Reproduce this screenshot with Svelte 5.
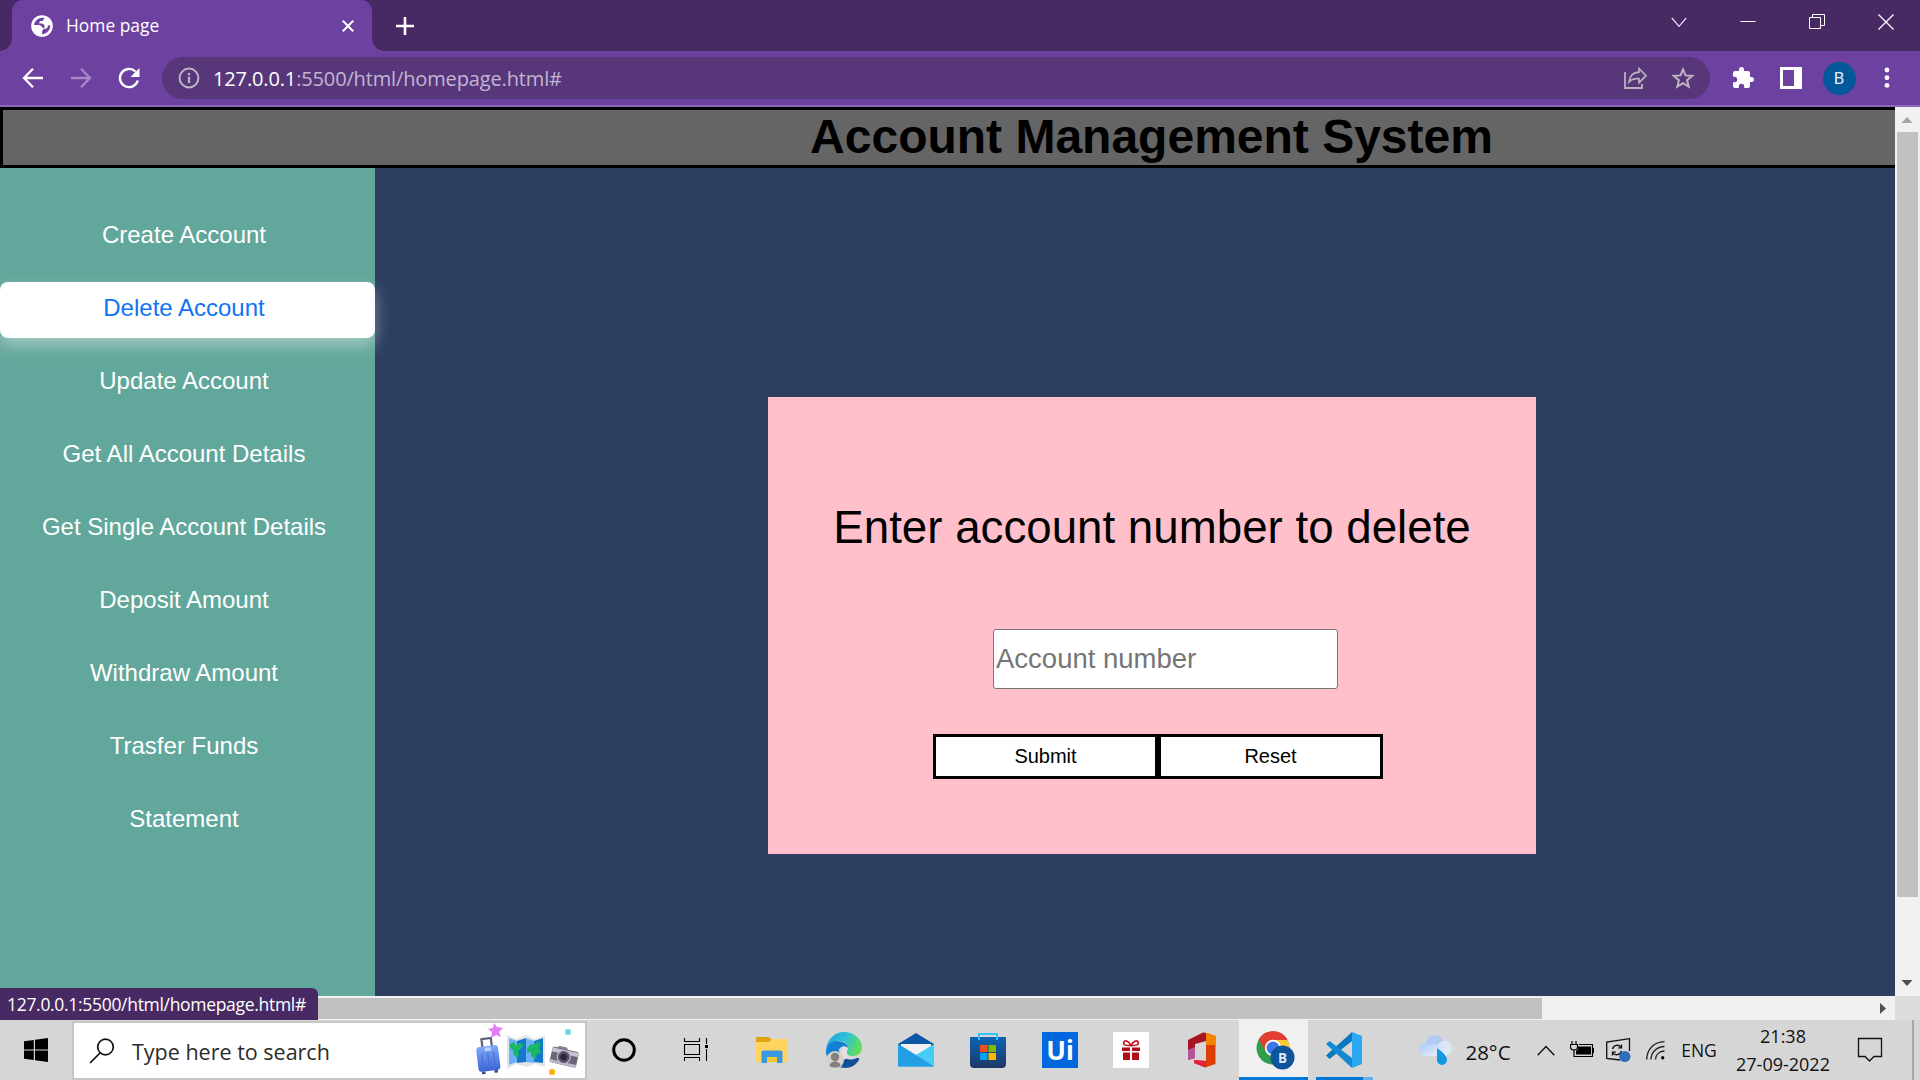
<script>
  const menu = [
    'Create Account',
    'Delete Account',
    'Update Account',
    'Get All Account Details',
    'Get Single Account Details',
    'Deposit Amount',
    'Withdraw Amount',
    'Trasfer Funds',
    'Statement'
  ];
  const active = 'Delete Account';
</script>

<div class="screen">
  <header class="tabstrip">
    <div class="tab">
      <svg class="favicon" width="22" height="22" viewBox="0 0 22 22">
        <circle cx="11" cy="11" r="10.800" fill="#fff" />
        <path d="M13.500 3C8.500 1.800 3.800 5.200 3 10h5.500l2.300 1.500 1.200 2 1.500-1V10L11 8.600H8.300V7.200l1-1.200h2.200z" fill="#6d41a0" />
        <path d="M19.200 10c.4 4.800-3.200 8.800-8 9.200l-.2-2.700 1.500-2.600 3-.4 1.200-1.200v-1.500z" fill="#6d41a0" />
      </svg>
      <span class="tab-title">Home page</span>
      <svg class="tab-close" width="14" height="14" viewBox="0 0 14 14"><path d="M1.800 1.800 12.200 12.200M12.200 1.800 1.800 12.200" stroke="#fff" stroke-width="2" /></svg>
    </div>
    <svg class="plus" width="20" height="20" viewBox="0 0 20 20"><path d="M10 1v18M1 10h18" stroke="#fff" stroke-width="2.600" /></svg>
    <div class="window-controls">
      <span><svg width="16" height="16" viewBox="0 0 16 16"><path d="M.8 4 8 12.300 15.200 4" fill="none" stroke="#e8e0f0" stroke-width="1.200" /></svg></span>
      <span><svg width="16" height="16" viewBox="0 0 16 16"><path d="M.5 7.500h15" stroke="#fff" /></svg></span>
      <span><svg width="16" height="16" viewBox="0 0 16 16"><path d="M.5 3.500h11v11H.5zM3.500 3V.5h12v11h-3.500" fill="none" stroke="#fff" /></svg></span>
      <span><svg width="16" height="16" viewBox="0 0 16 16"><path d="M.5.500l15 15M15.500.500l-15 15" stroke="#fff" stroke-width="1.300" /></svg></span>
    </div>
  </header>

  <div class="toolbar">
    <div class="nav">
      <svg width="24" height="24" viewBox="0 0 24 24"><path d="M22 12H3.500M12 2.800 3 12l9 9.200" fill="none" stroke="#fff" stroke-width="2.300" /></svg>
      <svg width="24" height="24" viewBox="0 0 24 24"><path d="M2 12h18.500M12 2.800 21 12l-9 9.200" fill="none" stroke="#a689c9" stroke-width="2.300" /></svg>
      <svg width="24" height="24" viewBox="0 0 24 24"><path d="M20.800 14.500A9.100 9.100 0 1 1 18.500 5.600" fill="none" stroke="#fff" stroke-width="2.400" /><path d="M22.500 2v9h-9z" fill="#fff" /></svg>
    </div>
    <div class="omnibox">
      <svg width="22" height="22" viewBox="0 0 22 22"><circle cx="11" cy="11" r="9.400" fill="none" stroke="#bcb8c4" stroke-width="2" /><path d="M11 9.800V16M11 6v2.200" stroke="#bcb8c4" stroke-width="2.200" /></svg>
      <span class="url"><b>127.0.0.1</b>:5500/html/homepage.html#</span>
      <svg class="share" width="24" height="24" viewBox="0 0 24 24"><path d="M2 6v16h17v-4" fill="none" stroke="#b9b1bd" stroke-width="1.800" /><path d="M6 16c.6-5.800 4-9.500 10-9.800V2.500l7 7.200-7 7v-4C11.500 12.400 8.500 13 6 16z" fill="none" stroke="#b9b1bd" stroke-width="1.700" /></svg>
      <svg width="24" height="24" viewBox="0 0 24 24"><path d="M12 3.300 14.500 9.400l6.700.5-5.100 4.300 1.600 6.500L12 17.200l-5.700 3.500 1.600-6.500L2.800 9.900l6.700-.5z" fill="none" stroke="#bdb5bf" stroke-width="2" /></svg>
    </div>
    <div class="actions">
      <span><svg width="24" height="24" viewBox="0 0 24 24"><path d="M20.500 11H19V7a2 2 0 0 0-2-2h-4V3.500a2.500 2.500 0 0 0-5 0V5H4a2 2 0 0 0-2 2v3.800h1.500a2.700 2.700 0 0 1 0 5.400H2V20a2 2 0 0 0 2 2h3.800v-1.500a2.700 2.700 0 0 1 5.400 0V22H17a2 2 0 0 0 2-2v-4h1.500a2.500 2.500 0 0 0 0-5z" fill="#fff" /></svg></span>
      <span><svg width="22" height="22" viewBox="0 0 22 22"><path d="M1.500 1.500h19v19h-19z" fill="none" stroke="#fff" stroke-width="3" /><path d="M14 1h7v20h-7z" fill="#fff" /></svg></span>
      <span><i class="avatar">B</i></span>
      <span><svg width="6" height="22" viewBox="0 0 6 22"><g fill="#fff"><circle cx="3" cy="3" r="2.400" /><circle cx="3" cy="10.700" r="2.400" /><circle cx="3" cy="18.400" r="2.400" /></g></svg></span>
    </div>
  </div>

  <div class="viewport">
    <div class="page">
      <div class="banner"><h1>Account Management System</h1></div>
      <div class="body">
        <nav class="sidebar">
          {#each menu as item}
            <a href="#top" class:active={item === active}>{item}</a>
          {/each}
        </nav>
        <main>
          <form class="card">
            <p>Enter account number to delete</p>
            <input placeholder="Account number" />
            <div class="buttons">
              <button type="button">Submit</button><button type="button">Reset</button>
            </div>
          </form>
        </main>
      </div>
    </div>
    <div class="vscroll">
      <svg width="25" height="25" viewBox="0 0 25 25"><path d="M6.500 16h11L12 10z" fill="#a3a3a3" /></svg>
      <div class="vthumb"></div>
      <svg width="25" height="25" viewBox="0 0 25 25"><path d="M6.500 9h11L12 15z" fill="#505050" /></svg>
    </div>
    <div class="hscroll">
      <div class="hthumb"></div>
      <svg width="24" height="24" viewBox="0 0 24 24"><path d="M9 7v11l6-5.500z" fill="#505050" /></svg>
    </div>
    <div class="corner"></div>
    <div class="status"><span>127.0.0.1:5500/html/homepage.html#</span></div>
  </div>

  <footer class="taskbar">
    <div class="start">
      <svg width="24" height="24" viewBox="0 0 24 24"><path d="M0 3.300 9.800 1.900v9.600H0zM11 1.700 24 0v11.500H11zM0 12.600h9.800v9.500L0 20.800zM11 12.600h13V24l-13-1.700z" /></svg>
    </div>
    <div class="search">
      <svg class="lens" width="26" height="26" viewBox="0 0 26 26"><circle cx="16.500" cy="9" r="7.800" fill="none" stroke="#111" stroke-width="1.700" /><path d="M11 15 1 25" stroke="#111" stroke-width="1.700" /></svg>
      <span class="search-text">Type here to search</span>
      <svg class="trip" width="112" height="56" viewBox="0 0 112 56">
        <defs>
          <linearGradient id="bag" x1="0" y1="0" x2="0" y2="1"><stop offset="0" stop-color="#7fabf6" /><stop offset="1" stop-color="#3e63d4" /></linearGradient>
        </defs>
        <g transform="rotate(-7 15 34)">
          <path d="M10.500 26V16.500h9.500v9.500" fill="none" stroke="#59627a" stroke-width="2.200" />
          <rect x="4" y="24" width="22" height="25" rx="3.500" fill="url(#bag)" />
          <path d="M9 31v15M15 31v15M21 31v15" stroke="#4a72d8" stroke-width="1.200" />
          <rect x="12.500" y="25.500" width="6.500" height="3.500" rx="1" fill="#b9d3ff" />
          <path d="M7 49h3.500v2.500H7zM19.500 49H23v2.500h-3.500z" fill="#354a83" />
        </g>
        <g transform="translate(0 1)">
          <path d="m34 12 9 4 10-4 9 4 10-4v32l-10-3-9 3-10-3-9 5z" fill="#e3e5e8" />
          <path d="M36 15l8 3v21l-8 3zM53 15l8 3v22l-8-1z" fill="#69b1fa" />
          <path d="m44 18 9-3v24l-9 1zM61 18l9-3v25l-9-1z" fill="#1678c9" />
          <path d="m37 21 4-2 2 4 3-3 4 1-1 4-4 3 1 4-2 3-3-3-1-5-3-2zM54 25l4-4 3 1 4-4 3 4-2 3 2 5-4 1-2 5-4-3v-4l-4 1z" fill="#18b866" />
        </g>
        <g transform="rotate(13 91 34)">
          <path d="M84 25h8l2 3H82z" fill="#8b849b" />
          <rect x="78" y="27" width="27" height="16" rx="2" fill="#6c6575" />
          <path d="M78 28h27v4H78z" fill="#c8c1d5" />
          <path d="M78 40h27v3H78z" fill="#beb7cd" />
          <circle cx="91" cy="35" r="6.500" fill="#5a5363" stroke="#bdb5cb" stroke-width="1.300" /><circle cx="91" cy="35" r="3.400" fill="#2e2940" />
        </g>
        <path d="m21 1 3 4 6 1-4 4 2 5-5-2-5 3 1-6-4-3 5-1z" fill="#e47cf5" />
        <circle cx="95" cy="10" r="3" fill="#6cd5e8" /><circle cx="79" cy="50" r="3" fill="#fdb000" />
      </svg>
    </div>
    <div class="apps">
      <span><svg width="26" height="26" viewBox="0 0 26 26"><circle cx="13" cy="13" r="10.300" fill="none" stroke="#000" stroke-width="3" /></svg></span>
      <span><svg width="26" height="26" viewBox="0 0 26 26"><path d="M1.500 1v3.500h15V1M1.500 7.500h15v10h-15zM1.500 24v-3.500h15V24M23.500 1v6M23.500 12v12" fill="none" stroke="#000" stroke-width="1.100" /><path d="M22 8h3v3h-3z" /></svg></span>
      <span class="explorer"><svg width="32" height="28" viewBox="0 0 32 28"><path d="M0 2Q0 1 1 1h12l3 3-3 4H0z" fill="#e2a20b" /><path d="M0 6h13l3-3h15q1 0 1 1v21q0 1-1 1H1q-1 0-1-1z" fill="#ffd45e" /><path d="M5.500 27V16q0-1.500 1.500-1.500h18q1.500 0 1.500 1.500v11H21v-6H11v6z" fill="#3a97e0" /><path d="M11 21h10v5H11z" fill="#fbc62e" /></svg></span>
      <span><svg width="36" height="36" viewBox="0 0 36 36">
        <defs><linearGradient id="edge" x1="0" y1=".3" x2="1" y2=".6"><stop offset="0" stop-color="#22a2dd" /><stop offset=".5" stop-color="#2fc2d6" /><stop offset="1" stop-color="#66e04f" /></linearGradient></defs>
        <path d="M0 18C1 7 9 0 18 0c11 0 18 8 18 15 0 6-4 9-9 9-4 0-7-1-7-3 0-1 2-2 2-5 0-5-6-8-11-7C6 9 1 13 0 18z" fill="url(#edge)" />
        <path d="M0 19C1 12 6 9 11 9c6 0 11 3 11 7-4-4-9-1-10 4-1 6 3 12 8 15.800C8 37 0 29 0 19z" fill="#117fd3" />
        <path d="M13 18c0 7 8 11 15 9 3-1 6-2 5 1-3 5-8 8-14 8-6-3-11-11-6-18z" fill="#114f9b" />
        <circle cx="9" cy="28" r="9" fill="#d6d3ce" /><path d="M15 18c2-3 4-4 6-2v6l2 2-5 4z" fill="#e3e1df" /><circle cx="9" cy="25" r="4.200" fill="#858079" /><path d="M3.500 34c0-6 11-6 11 0-3 2-8 2-11 0z" fill="#858079" />
      </svg></span>
      <span><svg width="36" height="34" viewBox="0 0 36 34"><path d="M0 11 18 0l18 11v5H0z" fill="#0d57a7" /><path d="M3 11h30v8L18 27 3 19z" fill="#f1f1f1" /><path d="M0 11 36 33.500H0z" fill="#2aa7ea" /><path d="m36 11-18 11L36 33.500z" fill="#43cdf7" /><path d="M0 11 18 22l18 11.500H0z" fill="#249fe4" /></svg></span>
      <span><svg width="36" height="36" viewBox="0 0 36 36"><defs><linearGradient id="store" x1="0" y1="0" x2="0" y2="1"><stop offset="0" stop-color="#0b65b5" /><stop offset="1" stop-color="#1f3864" /></linearGradient></defs><path d="M0 5h36v27q0 4-4 4H4q-4 0-4-4z" fill="url(#store)" /><path d="M9 8V2h18v6" fill="none" stroke="#32c1f3" stroke-width="2" /><path d="M10 13h7.500v7H10z" fill="#f25022" /><path d="M18.500 13H26v7h-7.500z" fill="#7fba00" /><path d="M10 21h7.500v7H10z" fill="#00a4ef" /><path d="M18.500 21H26v7h-7.500z" fill="#ffb900" /></svg></span>
      <span><i class="uipath">Ui</i></span>
      <span class="gift"><svg width="36" height="36" viewBox="0 0 36 36"><path d="M0 0h36v36H0z" fill="#fff" /><path d="M9 15.500h8v3.500H9zM19 15.500h8v3.500h-8zM10 20.500h7V28h-7zM19 20.500h7V28h-7z" fill="#b00f18" /><path d="M17.500 13.500c-5 .3-7.500-.8-6.800-3.300C12 7.500 16 9 18 13.500c2-4.500 6-6 7.300-3.300.7 2.500-1.800 3.600-6.800 3.300z" fill="none" stroke="#c8141d" stroke-width="1.600" /></svg></span>
      <span class="office"><svg width="28" height="36" viewBox="0 0 28 36"><path d="M0 8 15 .5 18 1v8L7 12v14L0 28z" fill="#a51522" /><path d="M0 18l7-3v11l-7 2z" fill="#b5569b" /><path d="M17 .5 27.500 4v28L17 35.500 6 31v-3l12 1V1z" fill="#dc3e05" /><path d="M17 .5 27.500 4v9H18V1z" fill="#f58400" /><path d="M6 28l12 1v6.300h-1L6 31z" fill="#e3223f" /></svg></span>
      <span class="chrome"><svg width="40" height="40" viewBox="0 0 40 40">
        <circle cx="17" cy="17" r="16.500" fill="#2e9e4a" /><path d="M17 17 2.700 8.700A16.500 16.500 0 0 1 31.300 8.700z" fill="#e33e32" /><path d="M2.700 8.700 10 21l7-12.500h14.300A16.500 16.500 0 0 0 2.700 8.700z" fill="#e33e32" /><path d="M17 9h14.400A16.500 16.500 0 0 1 17.500 33.500L24 21z" fill="#fcc934" />
        <circle cx="17" cy="17" r="8.200" fill="#fff" /><circle cx="17" cy="17" r="6.400" fill="#3b78e7" />
        <circle cx="26.500" cy="26.500" r="12" fill="#0d549b" /><text x="26.500" y="31.500" text-anchor="middle" font-size="13.500" font-weight="700" fill="#d9e8f5">B</text>
      </svg></span>
      <span class="vscode"><svg width="36" height="36" viewBox="0 0 36 36"><path d="M0 23.500 3.500 27 26 9V0z" fill="#0b78be" /><path d="M3.500 9 0 12l26 24V26z" fill="#118ad2" /><path d="m26 0 10 4v28l-10 4z" fill="#2aa8f2" /></svg></span>
    </div>
    <div class="tray">
      <span class="w48"><svg width="34" height="30" viewBox="0 0 34 30"><defs><linearGradient id="cloud" x1="0" y1="0" x2="1" y2="1"><stop offset="0" stop-color="#a9c8f6" /><stop offset="1" stop-color="#f1f5fc" /></linearGradient></defs><circle cx="16" cy="9" r="9" fill="#b2cbf3" /><circle cx="26" cy="13" r="7.500" fill="#dde6f5" /><path d="M7 21a6.500 6.500 0 1 1 4-11.500C15 8 21 10 26 13l1 8z" fill="url(#cloud)" /><path d="M18 13c4 3 10 7 10 12a5 5 0 0 1-10 0z" fill="#1399e2" /></svg></span>
      <span class="temp w58">28°C</span>
      <span class="caret"><svg width="18" height="11" viewBox="0 0 18 11"><path d="M.7 10.300 9 1.500l8.300 8.800" fill="none" stroke="#111" stroke-width="1.400" /></svg></span>
      <span class="w36 power"><svg width="24" height="18" viewBox="0 0 24 18"><path d="M2 0v3M6 0v3M.5 3.500h7v3Q7 9 4 9 1 9 .5 6.500zM4 9v6.500h18.500v-12H9" fill="none" stroke="#000" stroke-width="1.200" /><path d="M8 5.500h13v8H6V10l2-2zM23 7h1v5h-1z" /></svg></span>
      <span class="w38"><svg width="25" height="25" viewBox="0 0 25 25"><path d="M14 22 .7 20.500V4L23.500.7V13" fill="none" stroke="#111" stroke-width="1.300" /><path d="M6.500 11a5 5 0 0 1 9-1.500m0-3v3.300h-3.300M15.500 13a5 5 0 0 1-9 1.500m0 3v-3.300h3.300" fill="none" stroke="#111" stroke-width="1.300" /><circle cx="18.800" cy="18.500" r="5.600" fill="#2d70b9" /></svg></span>
      <span class="w36 wifi"><svg width="19" height="19" viewBox="0 0 19 19"><g fill="none" stroke="#222" stroke-width="1.300"><path d="M.7 18.500C1 8 8 1 18.500.7M5 18.500C5 11 11 5.500 18.500 5.500M9.500 18.500c0-5 4-8.500 9-8.500" /></g><circle cx="16.700" cy="16.700" r="1.700" /></svg></span>
      <span class="lang w50">ENG</span>
      <span class="clock"><em class="time">21:38</em><em class="date">27-09-2022</em></span>
      <span class="w56"><svg width="26" height="26" viewBox="0 0 26 26"><path d="M1.500 1.500h23v18H17l-4.500 4.500L8 19.500H1.500z" fill="none" stroke="#111" stroke-width="1.300" /></svg></span>
      <i class="peek"></i>
    </div>
  </footer>
</div>

<style>
  :global(body) { margin: 0; overflow: hidden; }
  .screen {
    width: 1920px; height: 1080px; overflow: hidden;
    display: flex; flex-direction: column;
    font-family: "Open Sans", "Noto Sans", sans-serif;
    background: #2d3e61;
  }
  svg { display: block; flex: none; }
  span, i, em { font-style: normal; }

  .tabstrip { height: 51px; flex: none; background: #472a64; display: flex; padding-left: 12px; }
  .tab {
    position: relative; width: 360px; box-sizing: border-box; height: 51px; padding: 0 17px 0 19px;
    display: flex; align-items: center; background: #6d41a0; border-radius: 11px 11px 0 0; color: #fff;
  }
  .tab::before, .tab::after { content: ""; position: absolute; bottom: 0; width: 12px; height: 12px; }
  .tab::before { left: -12px; background: radial-gradient(circle at 0 0, transparent 11.500px, #6d41a0 12px); }
  .tab::after { right: -12px; background: radial-gradient(circle at 100% 0, transparent 11.500px, #6d41a0 12px); }
  .tab-title { margin-left: 13px; padding-bottom: 1px; font-size: 17.400px; line-height: 24px; }
  .tab-close { margin-left: auto; }
  .plus { margin: 16px 0 0 23px; }
  .window-controls { margin-left: auto; display: flex; height: 43px; }
  .window-controls span { width: 69px; display: flex; align-items: center; justify-content: center; }

  .toolbar { height: 56px; flex: none; box-sizing: border-box; background: #6d41a0; border-bottom: 2px solid #9068b8; display: flex; align-items: center; }
  .nav { display: flex; gap: 24px; padding-left: 21px; width: 141px; }
  .omnibox {
    width: 1548px; height: 42px; box-sizing: border-box; border-radius: 21px; background: #57377a;
    display: flex; align-items: center; padding: 0 15px 0 16px;
  }
  .url { margin-left: 13px; padding-top: 1px; font-size: 20px; line-height: 28px; letter-spacing: -.14px; color: #c3b5d2; white-space: nowrap; }
  .url b { font-weight: 400; color: #fff; }
  .share { margin: 0 24px 0 auto; }
  .actions { display: flex; padding-left: 9px; }
  .actions span { width: 48px; display: flex; align-items: center; justify-content: center; }
  .avatar { width: 33px; height: 33px; border-radius: 50%; background: #03579b; color: #e0edf5; font: 17px/33px Roboto, sans-serif; text-align: center; }

  .viewport { position: relative; height: 913px; flex: none; display: grid; grid-template: 889px 24px / 1895px 25px; }
  .page { overflow: hidden; background: #2d3e61; font-family: "Liberation Sans", Arial, sans-serif; }
  .banner { width: 2303px; height: 61px; box-sizing: border-box; border: 3px solid #000; background: #656565; }
  .banner h1 { margin: 0; text-align: center; font-size: 48px; line-height: 53px; color: #000; }
  .body { display: flex; height: 828px; }
  .sidebar { width: 375px; flex: none; box-sizing: border-box; padding-top: 41px; background: #62a79b; display: flex; flex-direction: column; gap: 17px; }
  .sidebar a {
    box-sizing: border-box; height: 56px; padding: 12px 7px 0 0; text-align: center;
    font-size: 24px; line-height: 28px; color: #fff; text-decoration: none; border-radius: 8px;
  }
  .sidebar a.active { position: relative; background: #fff; color: #1173f5; box-shadow: 0 8px 16px rgba(255, 255, 255, .4); }
  main { width: 1554px; flex: none; display: flex; justify-content: center; align-items: flex-start; padding-top: 229px; box-sizing: border-box; }
  .card { width: 768px; height: 457px; background: #ffc0cb; display: flex; flex-direction: column; align-items: center; }
  .card p { margin: 103px 0 0; font-size: 45.700px; line-height: 56px; color: #000; white-space: nowrap; }
  .card input {
    margin: 73px 0 0 27px; width: 345px; height: 60px; box-sizing: border-box; padding: 0 2px; border: 1px solid #767676; border-radius: 3px;
    font: 27.500px "Liberation Sans", Arial, sans-serif; background: #fff; outline: none;
  }
  .card input::placeholder { color: #757575; opacity: 1; }
  .buttons { margin: 45px 0 0 12px; display: flex; }
  .buttons button { width: 225px; height: 45px; box-sizing: border-box; padding: 0; border: 3px solid #000; background: #fff; font: 20px "Liberation Sans", Arial, sans-serif; color: #000; }

  .vscroll { background: #f1f1f1; display: flex; flex-direction: column; justify-content: space-between; }
  .vthumb { width: 21px; height: 765px; margin: 0 auto auto 2px; background: #c1c1c1; }
  .hscroll { background: #f1f1f1; display: flex; justify-content: space-between; align-items: center; }
  .hthumb { width: 1542px; height: 21px; background: #c1c1c1; }
  .corner { background: #dcdcdc; }
  .status {
    position: absolute; left: 0; bottom: 0; width: 318px; height: 32px; box-sizing: border-box; padding-left: 7px;
    background: #472a64; border-radius: 0 6px 0 0; color: #fff; font-size: 17.500px; line-height: 32px; letter-spacing: -.31px; white-space: nowrap;
  }

  .taskbar { height: 60px; flex: none; background: #d6d6d6; display: flex; color: #111; }
  .start { width: 72px; padding-right: 1px; box-sizing: border-box; display: flex; align-items: center; justify-content: center; }
  .search { width: 515px; height: 59px; margin-top: 1px; box-sizing: border-box; border: 2px solid #c6c6c6; background: #fff; display: flex; align-items: center; padding-left: 15px; }
  .search-text { margin-left: 17px; padding-top: 2px; font-size: 21.500px; line-height: 30px; color: #2b2b2b; white-space: nowrap; }
  .trip { margin: -2px 0 0 auto; }
  .apps { display: flex; padding-left: 1px; }
  .apps span { width: 72px; height: 60px; display: flex; align-items: center; justify-content: center; }
  .apps .explorer { margin-left: 4px; }
  .uipath { width: 36px; height: 36px; background: #0067df; color: #fff; font: 700 26px/37px "Noto Sans", sans-serif; text-align: center; }
  .apps .gift { box-sizing: border-box; padding-right: 2px; }
  .apps .office { width: 68px; }
  .apps .chrome { width: 69px; box-sizing: border-box; background: #f0f0f0; border-bottom: 3px solid #0078d7; margin-left: 3px; padding: 5px 0 0 5px; }
  .apps .vscode { width: 57px; box-sizing: border-box; margin-left: 8px; border-bottom: 3px solid; border-image: linear-gradient(90deg, #0078d7 0 45px, #66aee7 45px) 3; padding: 3px 2px 0 0; }
  .tray { margin-left: auto; display: flex; }
  .tray span { height: 60px; display: flex; align-items: center; justify-content: center; white-space: nowrap; box-sizing: border-box; }
  .w48 { width: 48px; } .w58 { width: 58px; } .w36 { width: 36px; } .w38 { width: 38px; } .w50 { width: 50px; } .w56 { width: 56px; }
  .caret { width: 36px; margin-left: 10px; }
  .tray .temp { font-size: 20.500px; padding: 3px 2px 0 0; }
  .tray .w38 { padding-right: 2px; }
  .tray .w36 { padding-right: 1px; }
  .lang { font-size: 17.500px; }
  .tray .clock { width: 118px; flex-direction: column; }
  .clock em { font-size: 18px; line-height: 28px; }
  .peek { width: 2px; height: 60px; background: #a6a6a6; margin: 0 6px 0 14px; }
</style>
